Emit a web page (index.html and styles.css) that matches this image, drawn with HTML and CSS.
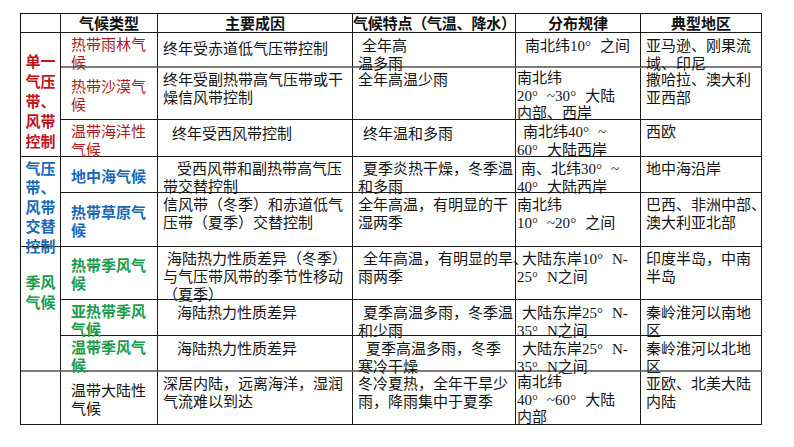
FILE: index.html
```html
<!DOCTYPE html>
<html lang="zh-CN">
<head>
<meta charset="utf-8">
<title>气候类型</title>
<link rel="stylesheet" href="styles.css">
</head>
<body>
<div class="sheet">
<div class="clim">
  <div class="c hd"></div>
  <div class="c hd">气候类型</div>
  <div class="c hd">主要成因</div>
  <div class="c hd wide">气候特点（气温、降水）</div>
  <div class="c hd">分布规律</div>
  <div class="c hd">典型地区</div>

  <div class="c grp g1 red">单一<br>气压<br>带、<br>风带<br>控制</div>
  <div class="c typ red gb">热带雨林气<br>候</div>
  <div class="c gb pt5">终年受赤道低气压带控制</div>
  <div class="c gb pt2 in4">全年高<br>温多雨</div>
  <div class="c gb pt2 in8 d">南北纬10<span class="dg">°</span>之间</div>
  <div class="c gb pt2">亚马逊、刚果流<br>域、印尼</div>

  <div class="c typ red mid">热带沙漠气<br>候</div>
  <div class="c">终年受副热带高气压带或干<br>燥信风带控制</div>
  <div class="c">全年高温少雨</div>
  <div class="c d tight">南北纬<br>20<span class="dg">°</span>~30<span class="dg">°</span>大陆<br>内部、西岸</div>
  <div class="c">撒哈拉、澳大利<br>亚西部</div>

  <div class="c typ red">温带海洋性<br>气候</div>
  <div class="c pt3 in9">终年受西风带控制</div>
  <div class="c pt3 in5">终年温和多雨</div>
  <div class="c d in6">南北纬40<span class="dg">°</span>~<br>60<span class="dg">°</span>大陆西岸</div>
  <div class="c">西欧</div>

  <div class="c grp g2 blue">气压<br>带、<br>风带<br>交替<br>控制</div>
  <div class="c typ blue b mid">地中海气候</div>
  <div class="c in14">受西风带和副热带高气压<br>带交替控制</div>
  <div class="c in5">夏季炎热干燥，冬季温<br>和多雨</div>
  <div class="c d in4">南、北纬30<span class="dg">°</span>~<br>40<span class="dg">°</span>大陆西岸</div>
  <div class="c">地中海沿岸</div>

  <div class="c typ blue b mid">热带草原气<br>候</div>
  <div class="c">信风带（冬季）和赤道低气<br>压带（夏季）交替控制</div>
  <div class="c">全年高温，有明显的干<br>湿两季</div>
  <div class="c d">南北纬<br>10<span class="dg">°</span>~20<span class="dg">°</span>之间</div>
  <div class="c">巴西、非洲中部、<br>澳大利亚北部</div>

  <div class="c grp g3 green gb">季风<br>气候</div>
  <div class="c typ green b mid">热带季风气<br>候</div>
  <div class="c in4">海陆热力性质差异（冬季）<br>与气压带风带的季节性移动<br>（夏季）</div>
  <div class="c in5">全年高温，有明显的旱、<br>雨两季</div>
  <div class="c d in5">大陆东岸10<span class="dg">°</span>N-<br>25<span class="dg">°</span>N之间</div>
  <div class="c">印度半岛，中南<br>半岛</div>

  <div class="c typ green b">亚热带季风<br>气候</div>
  <div class="c pt2 in14">海陆热力性质差异</div>
  <div class="c pt2 in5">夏季高温多雨，冬季温<br>和少雨</div>
  <div class="c pt2 d in5">大陆东岸25<span class="dg">°</span>N-<br>35<span class="dg">°</span>N之间</div>
  <div class="c pt2">秦岭淮河以南地<br>区</div>

  <div class="c typ green b gb">温带季风气<br>候</div>
  <div class="c gb pt2 in14">海陆热力性质差异</div>
  <div class="c gb pt2 in8">夏季高温多雨，冬季<br>寒冷干燥</div>
  <div class="c gb pt2 d in5">大陆东岸25<span class="dg">°</span>N-<br>35<span class="dg">°</span>N之间</div>
  <div class="c gb pt2">秦岭淮河以北地<br>区</div>

  <div class="c"></div>
  <div class="c typ mid">温带大陆性<br>气候</div>
  <div class="c">深居内陆，远离海洋，湿润<br>气流难以到达</div>
  <div class="c">冬冷夏热，全年干旱少<br>雨，降雨集中于夏季</div>
  <div class="c d tight">南北纬<br>40<span class="dg">°</span>~60<span class="dg">°</span>大陆<br>内部</div>
  <div class="c">亚欧、北美大陆<br>内陆</div>
</div>
</div>
</body>
</html>
```
FILE: styles.css
```css
html, body {
  margin: 0;
  padding: 0;
  background: #ffffff;
}

body {
  font-family: "Liberation Serif", "Noto Sans CJK SC", serif;
  font-size: 15px;
  color: #141414;
}

.sheet {
  padding: 13px 0 0 20px;
}

.clim {
  display: grid;
  grid-template-columns: 40px 97px 195px 163px 125px 121px;
  grid-template-rows: 19px 35px 52px 37px 36px 54px 53px 36px 36px 53px;
  width: 741px;
  border-top: 1px solid #111;
  border-left: 1px solid #111;
}

.c {
  box-sizing: border-box;
  border-right: 1px solid #1c1c1c;
  border-bottom: 1px solid #1c1c1c;
  padding: 3px 0 0 5px;
  line-height: 18px;
  white-space: nowrap;
  min-width: 0;
}

.hd {
  font-weight: bold;
  text-align: center;
  padding: 1px 0 0 0;
  line-height: 18px;
  color: #111;
}

.hd.wide {
  text-align: left;
  letter-spacing: -0.2px;
}

.gb {
  border-bottom: 2px solid #7d7d7d;
}

.grp {
  text-align: center;
  padding: 0;
  font-weight: bold;
  line-height: 20px;
}
.g1 { grid-row: span 3; padding-top: 19px; }
.g2 { grid-row: span 2; padding-top: 3px; line-height: 19.4px; }
.g3 { grid-row: span 3; padding-top: 26px; }

.typ {
  padding-left: 10px;
}

.mid {
  display: flex;
  flex-direction: column;
  justify-content: center;
  padding-top: 4px;
}

.d { padding-left: 1px; }

.tight {
  line-height: 17.6px;
  padding-top: 2px;
}

.red { color: #ad1a22; }
.blue { color: #1769b8; }
.green { color: #1b9b4c; }
.grp.red { color: #c0141c; }
.b { font-weight: bold; }

.pt2 { padding-top: 4px; }
.pt3 { padding-top: 5px; }
.pt5 { padding-top: 7px; }

.in4 { text-indent: 4px; }
.in5 { text-indent: 5px; }
.in6 { text-indent: 6px; }
.in8 { text-indent: 8px; }
.in9 { text-indent: 9px; }
.in14 { text-indent: 14px; }

.dg {
  display: inline-block;
  width: 15px;
  text-indent: 0;
}
```
